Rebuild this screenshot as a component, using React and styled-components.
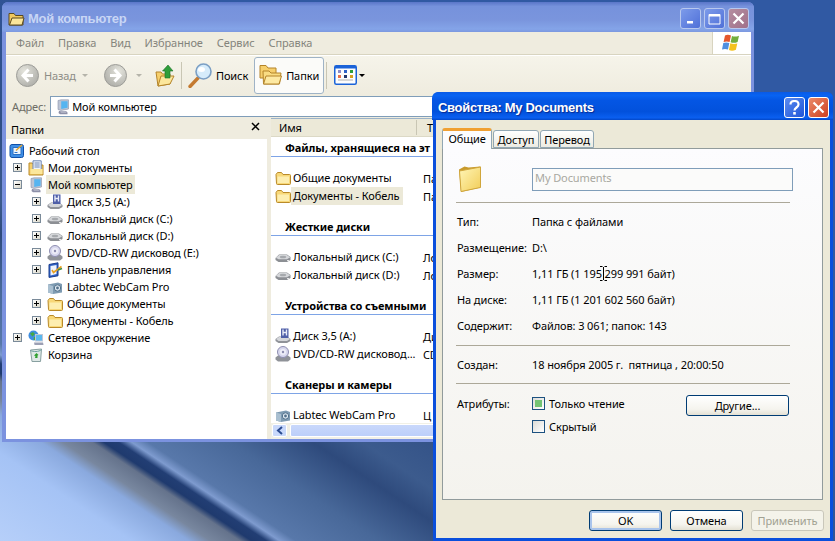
import styled, { createGlobalStyle } from "styled-components";

const GlobalStyle = createGlobalStyle`
  html, body {
    margin: 0;
    padding: 0;
    width: 835px;
    height: 541px;
    overflow: hidden;
    font-family: "Noto Sans", "Liberation Sans", sans-serif;
    font-size: 11px;
    letter-spacing: -0.1px;
    color: #000;
  }
  * { box-sizing: border-box; }
`;

const Desktop = styled.div`
  position: relative;
  width: 835px;
  height: 541px;
  overflow: hidden;
  background: linear-gradient(
    33.7deg,
    #b6cff9 0%,
    #a5c3f5 8%,
    #8aa9de 11.5%,
    #78879f 12.8%,
    #65738c 14.6%,
    #1f3a6e 15.3%,
    #223e74 16.2%,
    #7e9bcf 17%,
    #5878aa 18%,
    #486899 23%,
    #2e4a7c 28%,
    #3c5b8d 31%,
    #2f4e85 38%,
    #3059a3 60%,
    #3059a3 100%
  );
`;

/* ---------- window chrome ---------- */

const ExplorerWindow = styled.div`
  position: absolute;
  left: 2px;
  top: 2px;
  width: 752px;
  height: 440px;
  display: flex;
  flex-direction: column;
  background: #7b92df;
  border-radius: 6px 6px 0 0;
  padding: 0 3px 3px 4px;
`;

const DialogWindow = styled.div`
  position: absolute;
  left: 433px;
  top: 92px;
  width: 400px;
  height: 449px;
  display: flex;
  flex-direction: column;
  background: #0a4fdc;
  border-radius: 6px 6px 0 0;
  padding: 0 3px 3px 3px;
`;

const TitleBar = styled.div`
  flex: none;
  height: ${(p) => (p.$active ? 28 : 30)}px;
  display: flex;
  align-items: center;
  gap: 3px;
  margin: 0 -3px 0 -4px;
  padding: ${(p) => (p.$active ? "3px 4px 0 6px" : "3px 5px 0 6px")};
  border-radius: 6px 6px 0 0;
  background: ${(p) =>
    p.$active
      ? "linear-gradient(180deg,#0a5ae6 0%,#0863f2 12%,#0456e4 30%,#0251dc 70%,#0a5ff0 92%,#0247c8 100%)"
      : "linear-gradient(180deg,#5a76c8 0%,#7692dc 15%,#7a95dd 60%,#84a4e8 90%,#7c98e0 100%)"};
`;

const TitleText = styled.span`
  flex: 1;
  font-family: "Liberation Sans", sans-serif;
  font-weight: 700;
  font-size: 13px;
  letter-spacing: -0.3px;
  color: ${(p) => (p.$active ? "#fff" : "#c8d6f5")};
  text-shadow: ${(p) => (p.$active ? "1px 1px 1px #0a2a90" : "none")};
`;

const TitleButton = styled.div`
  width: 21px;
  height: 21px;
  display: flex;
  align-items: center;
  justify-content: center;
  border: 1px solid ${(p) => (p.$dim ? "#b8c8ee" : "#fff")};
  border-radius: 3px;
  background: ${(p) => p.$bg};
`;

/* ---------- explorer: menu + toolbar + address ---------- */

const MenuRow = styled.div`
  flex: none;
  height: 23px;
  display: flex;
  background: #efecdf;
  border-bottom: 1px solid #d8d4c0;
`;

const MenuList = styled.div`
  flex: 1;
  display: flex;
  align-items: center;
  gap: 14px;
  padding: 0 0 1px 10px;
  color: #84847c;
`;

const LogoBox = styled.div`
  width: 39px;
  display: flex;
  align-items: center;
  justify-content: center;
  background: #fff;
  border-left: 1px solid #d8d4c0;
`;

const ToolRow = styled.div`
  flex: none;
  height: 39px;
  display: flex;
  align-items: center;
  padding-left: 10px;
  border-top: 1px solid #fff;
  background: linear-gradient(180deg, #f6f4ea, #efecdf);
`;

const ToolLabel = styled.span`
  margin-left: ${(p) => p.$gap}px;
  color: ${(p) => (p.$dim ? "#8d8d86" : "#000")};
`;

const Caret = styled.span`
  width: 0;
  height: 0;
  margin-left: ${(p) => p.$gap}px;
  border-left: 3px solid transparent;
  border-right: 3px solid transparent;
  border-top: 3px solid ${(p) => (p.$dim ? "#b5b4aa" : "#000")};
`;

const ToolSpacer = styled.span`
  display: flex;
  margin-left: ${(p) => p.$gap}px;
`;

const ToolDivider = styled.span`
  width: 1px;
  height: 27px;
  margin-left: ${(p) => p.$gap}px;
  background: #c9c6b4;
`;

const ActiveTool = styled.div`
  height: 37px;
  width: 70px;
  margin-left: 6px;
  display: flex;
  align-items: center;
  gap: 4px;
  padding-left: 4px;
  background: #fbfbf9;
  border: 1px solid #9fb3c6;
  border-radius: 3px;
`;

const AddressRow = styled.div`
  flex: none;
  height: 24px;
  display: flex;
  align-items: center;
  gap: 4px;
  padding: 1px 0 0 6px;
  background: #efecdf;
  color: #6d6d66;
`;

const AddressField = styled.div`
  flex: 1;
  height: 21px;
  display: flex;
  align-items: center;
  gap: 1px;
  padding-left: 4px;
  background: #fff;
  border: 1px solid #7f9db9;
  color: #000;
`;

/* ---------- explorer: panes ---------- */

const Panes = styled.div`
  flex: 1;
  min-height: 0;
  display: flex;
  background: #efecdf;
`;

const TreePane = styled.div`
  width: 261px;
  display: flex;
  flex-direction: column;
`;

const PaneHeader = styled.div`
  flex: none;
  height: 21px;
  display: flex;
  align-items: flex-start;
  justify-content: space-between;
  padding: 4px 7px 0 5px;
  background: #efecdf;
`;

const TreeBody = styled.div`
  flex: 1;
  padding-top: 3px;
  background: #fff;
`;

const TreeRow = styled.div`
  height: 17px;
  display: flex;
  align-items: center;
  padding-left: ${(p) => [3, 7, 26][p.$level]}px;
`;

const Expander = styled.span`
  flex: none;
  width: 9px;
  height: 9px;
  margin-right: 6px;
  position: relative;
  border: 1px solid ${(p) => (p.$empty ? "transparent" : "#7a8a99")};
  background: ${(p) => (p.$empty ? "none" : "linear-gradient(135deg,#fff,#d8d6c8)")};
  &::before {
    content: "";
    display: ${(p) => (p.$empty ? "none" : "block")};
    position: absolute;
    left: 1px;
    top: 3px;
    width: 5px;
    height: 1px;
    background: #000;
  }
  &::after {
    content: "";
    display: ${(p) => (p.$plus ? "block" : "none")};
    position: absolute;
    left: 3px;
    top: 1px;
    width: 1px;
    height: 5px;
    background: #000;
  }
`;

const TreeLabel = styled.span`
  margin-left: 2px;
  padding: 2px 2px;
  white-space: nowrap;
  background: ${(p) => (p.$selected ? "#ece9d8" : "transparent")};
`;

const ListPane = styled.div`
  flex: 1;
  min-width: 0;
  margin-left: 4px;
  display: flex;
  flex-direction: column;
  overflow: hidden;
`;

const ColumnHeader = styled.div`
  flex: none;
  height: 19px;
  display: flex;
  align-items: center;
  background: #ece9d8;
  border-top: 1px solid #9db3c8;
  border-bottom: 1px solid #dcd9c6;
`;

const ColumnTitle = styled.span`
  width: ${(p) => p.$width}px;
  padding-left: ${(p) => p.$pad}px;
  border-right: 1px solid ${(p) => (p.$last ? "transparent" : "#c9c6b4")};
  white-space: nowrap;
`;

const ListBody = styled.div`
  flex: 1;
  min-height: 0;
  overflow: hidden;
  padding-top: 1px;
  background: #fff;
`;

const GroupTitle = styled.div`
  height: 19px;
  margin-top: ${(p) => (p.$first ? 0 : 12)}px;
  margin-bottom: 12px;
  padding: 2px 0 0 14px;
  font-weight: 700;
  white-space: nowrap;
  border-bottom: 1px solid #7ea4e6;
`;

const ListItem = styled.div`
  height: 18px;
  display: flex;
  align-items: center;
  padding-left: 4px;
`;

const NameCell = styled.div`
  width: 132px;
  flex: none;
  white-space: nowrap;
`;

const ItemLabel = styled.span`
  display: inline-block;
  height: 18px;
  line-height: 18px;
  padding: 0 ${(p) => (p.$selected ? "4px" : "0")} 0 2px;
  background: ${(p) => (p.$selected ? "#ece9d8" : "transparent")};
`;

const ScrollTrack = styled.div`
  flex: none;
  height: 16px;
  display: flex;
  gap: 3px;
  padding: 1px 0 2px 1px;
  background: #f1f0e6;
`;

const ScrollArrow = styled.div`
  width: 15px;
  display: flex;
  align-items: center;
  justify-content: center;
  background: #c8d8fb;
  border: 1px solid #fff;
  border-radius: 2px;
`;

const ScrollThumb = styled.div`
  flex: 1;
  background: linear-gradient(180deg, #c9d8fb, #bccffa);
  border: 1px solid #fff;
  border-radius: 2px;
`;

/* ---------- dialog ---------- */

const DialogBody = styled.div`
  flex: 1;
  min-height: 0;
  display: flex;
  flex-direction: column;
  padding: 0 7px 0 6px;
  background: #ece9d8;
`;

const TabStrip = styled.div`
  flex: none;
  height: 28px;
  display: flex;
  align-items: flex-end;
  position: relative;
  z-index: 1;
`;

const Tab = styled.div`
  height: ${(p) => (p.$active ? 21 : 18)}px;
  width: ${(p) => p.$width}px;
  margin: ${(p) => (p.$active ? "0 0 -1px 0" : "0 0 0 1px")};
  display: flex;
  align-items: center;
  justify-content: center;
  padding-bottom: ${(p) => (p.$active ? 3 : 0)}px;
  border: 1px solid #91a7b4;
  border-bottom: ${(p) => (p.$active ? "none" : "1px solid #91a7b4")};
  border-top: ${(p) => (p.$active ? "3px solid #f0a033" : "1px solid #91a7b4")};
  border-radius: 3px 3px 0 0;
  background: ${(p) => (p.$active ? "#fcfcfe" : "linear-gradient(180deg,#fff,#ecebe2)")};
`;

const TabPanel = styled.div`
  flex: none;
  height: 352px;
  padding: 19px 0 0 13px;
  border: 1px solid #919b9c;
  background: linear-gradient(180deg, #fcfcfe 0%, #f4f3ee 100%);
`;

const NameRow = styled.div`
  width: 337px;
  height: 23px;
  display: flex;
`;

const BigFolderSlot = styled.div`
  width: 76px;
  padding-left: 2px;
  margin-top: -3px;
`;

const NameField = styled.div`
  width: 261px;
  display: flex;
  align-items: center;
  padding: 0 0 4px 2px;
  color: #a8a8a0;
  background: #fbfbfa;
  border: 1px solid #7f9db9;
`;

const Separator = styled.div`
  width: 334px;
  height: 1px;
  margin: ${(p) => p.$top}px 0 ${(p) => p.$bottom}px;
  background: #aca899;
`;

const PropRow = styled.div`
  height: 26px;
  display: flex;
  align-items: center;
  position: relative;
`;

const PropName = styled.span`
  width: 76px;
  flex: none;
  padding-left: 1px;
`;

const PropValue = styled.span`
  white-space: pre;
`;

const IBeam = styled.svg`
  position: absolute;
  left: 144px;
  top: 6px;
`;

const AttrBlock = styled.div`
  display: flex;
  margin-top: 8px;
`;

const AttrName = styled(PropName)`
  height: 23px;
  line-height: 23px;
`;

const AttrChecks = styled.div`
  width: 154px;
`;

const CheckRow = styled.div`
  height: 23px;
  display: flex;
  align-items: center;
  gap: 4px;
`;

const CheckBox = styled.span`
  width: 13px;
  height: 13px;
  padding: 2px;
  border: 1px solid #1c5180;
  background: linear-gradient(135deg, #dcdcd7, #fff);
  &::after {
    content: "";
    display: ${(p) => (p.$on ? "block" : "none")};
    width: 7px;
    height: 7px;
    background: #73c373;
  }
`;

const PushButton = styled.div`
  flex: none;
  width: ${(p) => p.$width}px;
  height: ${(p) => p.$height}px;
  margin-top: ${(p) => p.$top || 0}px;
  display: flex;
  align-items: center;
  justify-content: center;
  color: ${(p) => (p.$disabled ? "#a1a192" : "#000")};
  border: 1px solid ${(p) => (p.$disabled ? "#c9c7ba" : "#003c74")};
  border-radius: 3px;
  background: ${(p) => (p.$disabled ? "#f4f3ea" : "linear-gradient(180deg,#fff 0%,#f5f4ee 70%,#e4e1d4 100%)")};
  box-shadow: ${(p) => (p.$default ? "inset 0 0 0 2px #a9c4ec" : "none")};
`;

const DialogFooter = styled.div`
  flex: 1;
  display: flex;
  justify-content: flex-end;
  gap: 8px;
  padding: 10px 0 0 0;
  margin-right: -1px;
`;

/* ---------- icons, all hand drawn ---------- */

const Svg = ({ size = 16, children }) => (
  <svg width={size} height={size} viewBox="0 0 16 16" style={{ flex: "none", display: "block" }}>
    {children}
  </svg>
);

const FolderIcon = () => (
  <Svg>
    <path d="M1 4.5 2.5 2.5h4L8 4.5h6.5a1 1 0 0 1 1 1v8a1 1 0 0 1-1 1h-12a1 1 0 0 1-1-1z" fill="#f8d878" stroke="#b98a2a" />
    <path d="M2.5 6.5h11.5v6.5H2.5z" fill="#fdeeb0" />
  </Svg>
);

const DriveIcon = () => (
  <Svg>
    <path d="M.5 9 4 5.5h8L15.5 8v3L12 13H3.5L.5 11z" fill="#8c8f94" />
    <path d="M.8 8.8 4.2 6h7.6l3.4 2.2-3.2 2H3.6z" fill="#d5d7da" />
    <ellipse cx="8" cy="8" rx="3.2" ry="1.3" fill="#a6a9ad" />
    <path d="M12 11.5h2" stroke="#e8e8e8" />
  </Svg>
);

const FloppyIcon = () => (
  <Svg>
    <path d="M.5 11 4 8.5h8l3.5 2.5v2L12 15H3.5L.5 13z" fill="#8f9298" />
    <path d="M1 11 4 9h8l3 2-3 2H3.5z" fill="#d4d6da" />
    <path d="M6 .5h7.5v9.5H6z" fill="#4f5fa8" />
    <path d="M8 1.5v6M11.5 1.5v6M8 4.5h3.5" stroke="#e8ecf8" strokeWidth="1.4" fill="none" />
  </Svg>
);

const DvdIcon = () => (
  <Svg>
    <path d="M.5 11.5 3 9.5h10l2.5 2v2L13 15.5H3l-2.5-2z" fill="#8f9298" />
    <circle cx="8" cy="6" r="5.5" fill="#d8d8ee" stroke="#8d8db0" />
    <circle cx="8" cy="6" r="3" fill="#eeeef8" />
    <circle cx="8" cy="6" r="1.2" fill="#8d8db0" />
  </Svg>
);

const PanelIcon = () => (
  <Svg>
    <path d="M2 2.5 11 .8v13L2 15.4z" fill="#2e62c8" stroke="#1a3c8c" />
    <path d="M3.5 4 9.5 3v9l-6 1.4z" fill="#eef3fc" />
    <path d="M5 8l1.5 2.5L14.5 4.5" stroke="#e8a020" strokeWidth="1.6" fill="none" />
    <path d="M11 8l4-1.5" stroke="#3f8a3f" strokeWidth="1.4" />
  </Svg>
);

const CamIcon = () => (
  <Svg>
    <path d="M1 5.5 11 3.5l4 1.5v8.5L6 15 1 13.5z" fill="#7e9bb2" />
    <path d="M1 5.5 6 7v8L1 13.5z" fill="#a9bfd0" />
    <circle cx="10.5" cy="9" r="3.2" fill="#dfeaf2" stroke="#52708a" />
    <circle cx="10.5" cy="9" r="1.4" fill="#52708a" />
  </Svg>
);

const DesktopIcon = () => (
  <Svg>
    <rect x="1" y="1.5" width="13.5" height="13" rx="2" fill="#3f8fe6" stroke="#0f4fa8" />
    <path d="M4 4.5h8v7H4z" fill="#eaf4fe" stroke="#2a6fc4" />
    <path d="M7 7.5 13 2" stroke="#e8a428" strokeWidth="1.4" />
    <path d="M5.5 9.5h3" stroke="#2a6fc4" />
  </Svg>
);

const MyDocsIcon = () => (
  <Svg>
    <path d="M1 3h3.5l1.2 2H15v10H1z" fill="#f6cf6c" stroke="#b98a2a" />
    <path d="M5 .8h8.2v9H5z" fill="#eef3fb" stroke="#6d85b4" />
    <path d="M6.5 3h5.2M6.5 5h5.2M6.5 7h5.2" stroke="#6d85b4" />
    <path d="M2.5 9h12v5h-12z" fill="#fce79c" />
  </Svg>
);

const ComputerIcon = () => (
  <Svg>
    <path d="M3 1.5 6 .8h7.5V10L6 11.5 3 10.5z" fill="#bcc4d4" stroke="#8890a8" strokeWidth=".6" />
    <path d="M6.2 2.2h6.4v6.6L6.2 10z" fill="#55b4f0" />
    <path d="M4 12h7l1.5 1.5v1.8H5L3.5 14z" fill="#8d90a8" />
    <path d="M5 12.5h5.5l1 1H6z" fill="#cdd0dc" />
  </Svg>
);

const NetworkIcon = () => (
  <Svg>
    <circle cx="5.5" cy="5.5" r="5" fill="#3f8ee0" />
    <path d="M2 3.5 5 2l2 2-2.5 2.5-1-1zM6 7l2.5.5L7 10.5 5.5 9.5z" fill="#45a845" />
    <path d="M7 4h8v7.5H7z" fill="#c0c6d6" />
    <path d="M8 5h6v5.5H8z" fill="#5ab8ee" />
    <path d="M6 12.5h9l.5 2.5H6.5z" fill="#9ca0b4" />
  </Svg>
);

const BinIcon = () => (
  <Svg>
    <path d="M2.5 3 13.5 2l-1 12.5h-8.5z" fill="#dfe8e6" stroke="#88a0a0" />
    <path d="M2.5 3.5c3 1.5 8 1.5 11-.8" stroke="#6fa0a0" fill="none" />
    <path d="M6 8.5 8.5 6l2 2-1 .5v2.5H7L7.5 9z" fill="#2fa02f" />
  </Svg>
);

const WinFlag = ({ size = 20 }) => (
  <svg width={size} height={size} viewBox="0 0 20 20">
    <path d="M3 2.5c2-1 4-.8 6 0L7.6 9c-2-.8-4-.8-6 0z" fill="#e4562c" />
    <path d="M10 3c2 .8 4.5.8 7-.3L15.6 9c-2.5 1.1-5 1-7 .3z" fill="#72ad3c" />
    <path d="M1.3 10c2-.8 4-.8 6 0L6 16.5c-2-.8-4-.8-6 0z" fill="#4f8fe0" />
    <path d="M8.3 10.3c2 .8 4.5.9 7 .2l-1.4 6.3c-2.5 1.1-5 1-7 .3z" fill="#f4c21f" />
  </svg>
);

const ArrowCircle = ({ flip }) => (
  <svg width="23" height="23" viewBox="0 0 23 23" style={{ flex: "none", display: "block", transform: flip ? "scaleX(-1)" : "none" }}>
    <defs>
      <radialGradient id={flip ? "nb" : "na"} cx=".35" cy=".3" r=".9">
        <stop offset="0" stopColor="#e4e4dc" />
        <stop offset="1" stopColor="#a5a5a0" />
      </radialGradient>
    </defs>
    <circle cx="11.5" cy="11.5" r="11" fill={`url(#${flip ? "nb" : "na"})`} stroke="#9d9d98" />
    <path d="M12.5 5.5 7 11.5l5.5 6M7.5 11.5H17" stroke="#fff" strokeWidth="3" fill="none" />
  </svg>
);

const UpFolder = () => (
  <svg width="20" height="23" viewBox="0 0 20 23" style={{ flex: "none", display: "block" }}>
    <path d="M1 8h5l1.5 2H15v10L3 22z" fill="#f6cf6c" stroke="#b4842a" />
    <path d="M3 22 6 12h13l-4 8z" fill="#fce79c" stroke="#b4842a" />
    <path d="M13 1 18 7h-3v7H10V7H7.5z" fill="#2f9e3a" stroke="#1c6f26" strokeWidth=".6" />
  </svg>
);

const SearchIcon = () => (
  <svg width="25" height="25" viewBox="0 0 25 25" style={{ flex: "none", display: "block" }}>
    <path d="M2 23.5 10 15" stroke="#c47a30" strokeWidth="3.4" strokeLinecap="round" />
    <circle cx="15.5" cy="8.5" r="7.5" fill="#d6ecfb" stroke="#7b9fc4" strokeWidth="1.6" />
    <ellipse cx="13.5" cy="6.5" rx="3.5" ry="2.5" fill="#fff" />
  </svg>
);

const FoldersIcon = () => (
  <svg width="23" height="22" viewBox="0 0 23 22" style={{ flex: "none", display: "block" }}>
    <path d="M1 1.5h6l2 2.5h8v10H1z" fill="#f6cf6c" stroke="#b4842a" />
    <path d="M4 7h6l2 2h10l-1.5 11H4.5z" fill="#f9dc82" stroke="#b4842a" />
    <path d="M4.5 20 7 12h15.5l-2.5 8z" fill="#fde9a2" stroke="#b4842a" />
  </svg>
);

const ViewsIcon = () => (
  <svg width="23" height="20" viewBox="0 0 23 20" style={{ flex: "none", display: "block" }}>
    <rect x=".75" y=".75" width="21.5" height="18.5" rx="1.5" fill="#fdfdfd" stroke="#1b63d8" strokeWidth="1.5" />
    <path d="M1 1h21v2.5H1z" fill="#1b63d8" />
    <path d="M4 5h3v3H4z" fill="#8c8cc8" />
    <path d="M10 5h3v3h-3z" fill="#2e62c8" />
    <path d="M16 5h3v3h-3z" fill="#2f9e3a" />
    <path d="M4 10h3v3H4z" fill="#e8704a" />
    <path d="M10 10h3v3h-3z" fill="#24386c" />
    <path d="M16 10h3v3h-3z" fill="#d8a020" />
    <path d="M4 15h15" stroke="#c8c8c8" strokeWidth="1.5" />
  </svg>
);

const TitleFolder = () => (
  <svg width="17" height="16" viewBox="0 0 17 16" style={{ flex: "none", display: "block" }}>
    <path d="M1 2.5h5l1.5 2H15V14H1z" fill="#f0c860" stroke="#5a4a20" />
    <path d="M4 7h12l-2 7H1.5z" fill="#fbe69a" stroke="#5a4a20" />
  </svg>
);

const BigFolder = () => (
  <svg width="24" height="28" viewBox="0 0 24 28" style={{ display: "block" }}>
    <defs>
      <linearGradient id="bf" x1="0" y1="0" x2="1" y2="1">
        <stop offset="0" stopColor="#fff6b8" />
        <stop offset="1" stopColor="#f2cd58" />
      </linearGradient>
    </defs>
    <path d="M1 4.5 6.5 1.5l4 1 12-1v21L3 27z" fill="#c89a2c" />
    <path d="M1.5 6 22.5 2v20.5L3 26.5z" fill="url(#bf)" stroke="#d0a63c" />
  </svg>
);

const MinGlyph = () => (
  <svg width="11" height="11" viewBox="0 0 11 11"><path d="M2 8h6v2.5H2z" fill="#fff" /></svg>
);
const MaxGlyph = () => (
  <svg width="13" height="13" viewBox="0 0 13 13"><path d="M1 2.5h11v9.5H1z" fill="none" stroke="#fff" /><path d="M1 2h11v2.5H1z" fill="#fff" /></svg>
);
const CloseGlyph = () => (
  <svg width="13" height="13" viewBox="0 0 13 13"><path d="M1.5 1.5l10 10M11.5 1.5l-10 10" stroke="#fff" strokeWidth="2.2" /></svg>
);
const PaneClose = () => (
  <svg width="9" height="9" viewBox="0 0 9 9"><path d="M1 1l7 7M8 1 1 8" stroke="#000" strokeWidth="1.5" /></svg>
);
const HelpGlyph = () => (
  <svg width="13" height="15" viewBox="0 0 13 15">
    <path d="M2.5 4.5C2.5 2 4.5 1 6.5 1s4 1 4 3.5c0 3-4 3-4 6" fill="none" stroke="#fff" strokeWidth="2.2" />
    <path d="M5.2 12h2.6v2.6H5.2z" fill="#fff" />
  </svg>
);

/* ---------- data ---------- */

const treeItems = [
  { level: 0, icon: <DesktopIcon />, text: "Рабочий стол" },
  { level: 1, exp: "plus", icon: <MyDocsIcon />, text: "Мои документы" },
  { level: 1, exp: "minus", icon: <ComputerIcon />, text: "Мой компьютер", selected: true },
  { level: 2, exp: "plus", icon: <FloppyIcon />, text: "Диск 3,5 (A:)" },
  { level: 2, exp: "plus", icon: <DriveIcon />, text: "Локальный диск (C:)" },
  { level: 2, exp: "plus", icon: <DriveIcon />, text: "Локальный диск (D:)" },
  { level: 2, exp: "plus", icon: <DvdIcon />, text: "DVD/CD-RW дисковод (E:)" },
  { level: 2, exp: "plus", icon: <PanelIcon />, text: "Панель управления" },
  { level: 2, exp: "empty", icon: <CamIcon />, text: "Labtec WebCam Pro" },
  { level: 2, exp: "plus", icon: <FolderIcon />, text: "Общие документы" },
  { level: 2, exp: "plus", icon: <FolderIcon />, text: "Документы - Кобель" },
  { level: 1, exp: "plus", icon: <NetworkIcon />, text: "Сетевое окружение" },
  { level: 1, exp: "empty", icon: <BinIcon />, text: "Корзина" },
];

// only what shows beside the dialog is kept in the headings and the second column
const groups = [
  {
    title: "Файлы, хранящиеся на эт",
    items: [
      { icon: <FolderIcon />, text: "Общие документы", type: "Па" },
      { icon: <FolderIcon />, text: "Документы - Кобель", type: "Па", selected: true },
    ],
  },
  {
    title: "Жесткие диски",
    items: [
      { icon: <DriveIcon />, text: "Локальный диск (C:)", type: "Ло" },
      { icon: <DriveIcon />, text: "Локальный диск (D:)", type: "Ло" },
    ],
  },
  {
    title: "Устройства со съемными",
    items: [
      { icon: <FloppyIcon />, text: "Диск 3,5 (A:)", type: "Ди" },
      { icon: <DvdIcon />, text: "DVD/CD-RW дисковод...", type: "CD" },
    ],
  },
  {
    title: "Сканеры и камеры",
    items: [{ icon: <CamIcon />, text: "Labtec WebCam Pro", type: "Ц" }],
  },
];

const menus = ["Файл", "Правка", "Вид", "Избранное", "Сервис", "Справка"];

function Explorer() {
  return (
    <ExplorerWindow>
      <TitleBar>
        <TitleFolder />
        <TitleText>Мой компьютер</TitleText>
        <TitleButton $dim $bg="linear-gradient(135deg,#7d9bea,#4f70d8)"><MinGlyph /></TitleButton>
        <TitleButton $dim $bg="linear-gradient(135deg,#7d9bea,#4f70d8)"><MaxGlyph /></TitleButton>
        <TitleButton $dim $bg="linear-gradient(135deg,#b58ea0,#a0708a)"><CloseGlyph /></TitleButton>
      </TitleBar>
      <MenuRow>
        <MenuList>
          {menus.map((m) => (
            <span key={m}>{m}</span>
          ))}
        </MenuList>
        <LogoBox><WinFlag /></LogoBox>
      </MenuRow>
      <ToolRow>
        <ArrowCircle />
        <ToolLabel $gap={5} $dim>Назад</ToolLabel>
        <Caret $gap={6} $dim />
        <ToolSpacer $gap={16}><ArrowCircle flip /></ToolSpacer>
        <Caret $gap={9} $dim />
        <ToolSpacer $gap={13}><UpFolder /></ToolSpacer>
        <ToolDivider $gap={6} />
        <ToolSpacer $gap={6}><SearchIcon /></ToolSpacer>
        <ToolLabel $gap={3}>Поиск</ToolLabel>
        <ActiveTool>
          <FoldersIcon />
          <span>Папки</span>
        </ActiveTool>
        <ToolDivider $gap={2} />
        <ToolSpacer $gap={7}><ViewsIcon /></ToolSpacer>
        <Caret $gap={2} />
      </ToolRow>
      <AddressRow>
        <span>Адрес:</span>
        <AddressField>
          <ComputerIcon />
          <span>Мой компьютер</span>
        </AddressField>
      </AddressRow>
      <Panes>
        <TreePane>
          <PaneHeader>
            <span>Папки</span>
            <PaneClose />
          </PaneHeader>
          <TreeBody>
            {treeItems.map((it) => (
              <TreeRow key={it.text} $level={it.level}>
                {it.exp && <Expander $plus={it.exp === "plus"} $empty={it.exp === "empty"} />}
                {it.icon}
                <TreeLabel $selected={it.selected}>{it.text}</TreeLabel>
              </TreeRow>
            ))}
          </TreeBody>
        </TreePane>
        <ListPane>
          <ColumnHeader>
            <ColumnTitle $width={146} $pad={8}>Имя</ColumnTitle>
            <ColumnTitle $width={17} $pad={10} $last>Т</ColumnTitle>
          </ColumnHeader>
          <ListBody>
            {groups.map((g, i) => (
              <div key={g.title}>
                <GroupTitle $first={i === 0}>{g.title}</GroupTitle>
                {g.items.map((it) => (
                  <ListItem key={it.text}>
                    {it.icon}
                    <NameCell>
                      <ItemLabel $selected={it.selected}>{it.text}</ItemLabel>
                    </NameCell>
                    <span>{it.type}</span>
                  </ListItem>
                ))}
              </div>
            ))}
          </ListBody>
          <ScrollTrack>
            <ScrollArrow>
              <svg width="8" height="9" viewBox="0 0 8 9"><path d="M6 1 2 4.5 6 8" fill="none" stroke="#2a4a90" strokeWidth="2" /></svg>
            </ScrollArrow>
            <ScrollThumb />
          </ScrollTrack>
        </ListPane>
      </Panes>
    </ExplorerWindow>
  );
}

function PropertiesDialog() {
  return (
    <DialogWindow>
      <TitleBar $active>
        <TitleText $active>Свойства: My Documents</TitleText>
        <TitleButton $bg="linear-gradient(135deg,#5c8cf0,#1f55d8)"><HelpGlyph /></TitleButton>
        <TitleButton $bg="linear-gradient(135deg,#ea8a6a,#cf4020)"><CloseGlyph /></TitleButton>
      </TitleBar>
      <DialogBody>
        <TabStrip>
          <Tab $active $width={50}>Общие</Tab>
          <Tab $width={46}>Доступ</Tab>
          <Tab $width={54}>Перевод</Tab>
        </TabStrip>
        <TabPanel>
          <NameRow>
            <BigFolderSlot><BigFolder /></BigFolderSlot>
            <NameField>My Documents</NameField>
          </NameRow>
          <Separator $top={11} $bottom={5} />
          <PropRow><PropName>Тип:</PropName><PropValue>Папка с файлами</PropValue></PropRow>
          <PropRow><PropName>Размещение:</PropName><PropValue>D:\</PropValue></PropRow>
          <PropRow>
            <PropName>Размер:</PropName>
            <PropValue>1,11 ГБ (1 195 299 991 байт)</PropValue>
            <IBeam width="7" height="15" viewBox="0 0 7 15">
              <path d="M0 .5h2.5M4.5.5H7M3.5 1v13M0 14.5h2.5M4.5 14.5H7" stroke="#000" fill="none" />
            </IBeam>
          </PropRow>
          <PropRow><PropName>На диске:</PropName><PropValue>1,11 ГБ (1 201 602 560 байт)</PropValue></PropRow>
          <PropRow><PropName>Содержит:</PropName><PropValue>Файлов: 3 061; папок: 143</PropValue></PropRow>
          <Separator $top={7} $bottom={5} />
          <PropRow><PropName>Создан:</PropName><PropValue>18 ноября 2005 г.  пятница , 20:00:50</PropValue></PropRow>
          <Separator $top={6} $bottom={5} />
          <AttrBlock>
            <AttrName>Атрибуты:</AttrName>
            <AttrChecks>
              <CheckRow><CheckBox $on /><span>Только чтение</span></CheckRow>
              <CheckRow><CheckBox /><span>Скрытый</span></CheckRow>
            </AttrChecks>
            <PushButton $width={103} $height={21} $top={3}>Другие...</PushButton>
          </AttrBlock>
        </TabPanel>
        <DialogFooter>
          <PushButton $width={73} $height={21} $default>OK</PushButton>
          <PushButton $width={73} $height={21}>Отмена</PushButton>
          <PushButton $width={73} $height={21} $disabled>Применить</PushButton>
        </DialogFooter>
      </DialogBody>
    </DialogWindow>
  );
}

export default function App() {
  return (
    <>
      <GlobalStyle />
      <Desktop>
        <Explorer />
        <PropertiesDialog />
      </Desktop>
    </>
  );
}
